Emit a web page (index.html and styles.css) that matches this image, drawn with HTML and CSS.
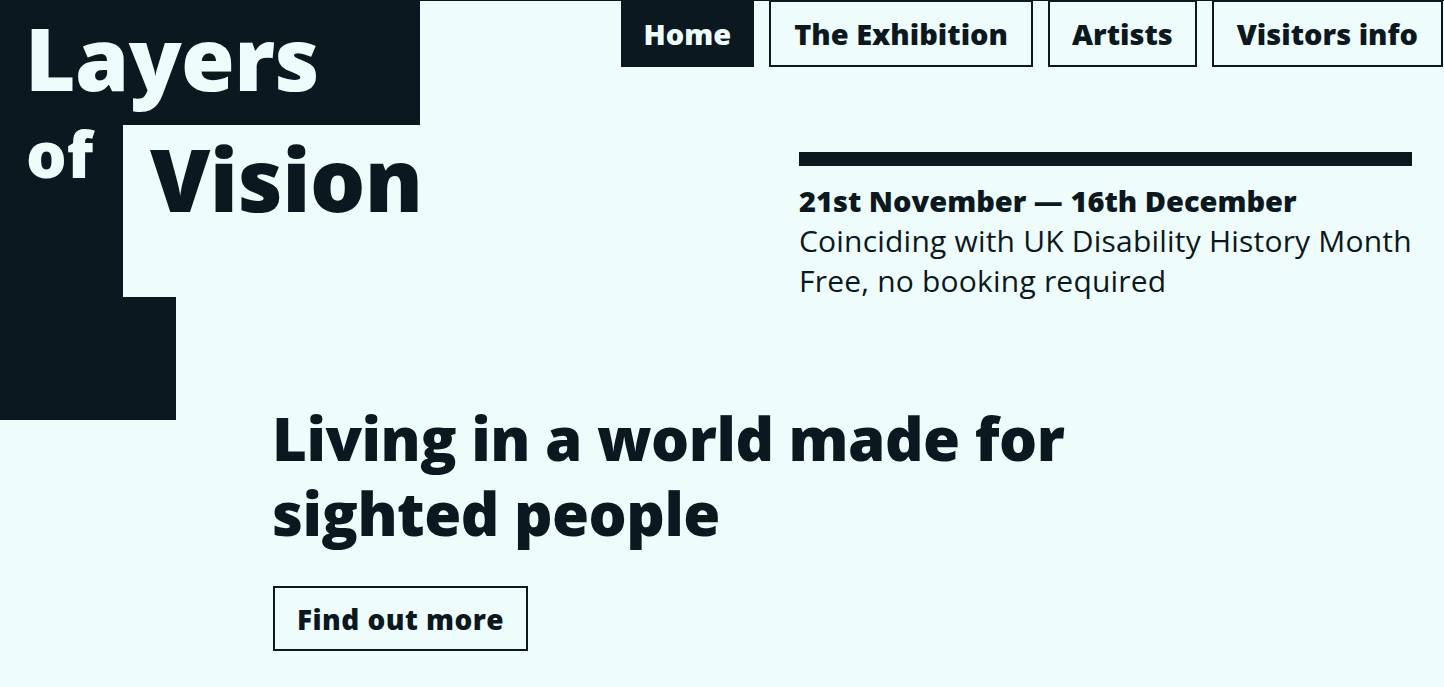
FILE: index.html
```html
<!DOCTYPE html>
<html lang="en">
<head>
<meta charset="utf-8">
<title>Layers of Vision</title>
<link rel="stylesheet" href="styles.css">
</head>
<body>
<div class="page">
  <header class="top">
    <div class="logo">
      <div class="logo-row1"><span class="logo-big">Layers</span></div>
      <div class="logo-row2">
        <div class="logo-of">of</div>
        <div class="logo-vision"><span class="logo-big">Vision</span></div>
      </div>
      <div class="logo-row3"></div>
    </div>
    <div class="side">
      <nav class="nav">
        <a class="nav-item nav-active" href="#">Home</a>
        <a class="nav-item" href="#">The Exhibition</a>
        <a class="nav-item nav-narrow" href="#">Artists</a>
        <a class="nav-item" href="#">Visitors info</a>
      </nav>
      <div class="info">
        <div class="info-bar"></div>
        <p class="info-dates">21st November — 16th December</p>
        <p class="info-line">Coinciding with UK Disability History Month</p>
        <p class="info-line">Free, no booking required</p>
      </div>
    </div>
  </header>
  <main class="hero">
    <h1 class="hero-title">Living in a world made for sighted people</h1>
    <a class="hero-btn" href="#">Find out more</a>
  </main>
</div>
</body>
</html>
```
FILE: styles.css
```css
* { box-sizing: border-box; }
html, body { margin: 0; padding: 0; }
body {
  background: #eefcfc;
  color: #0c1820;
  font-family: "Open Sans", "Liberation Sans", sans-serif;
  border-top: 1px solid #0c1820;
  height: 687px;
  overflow: hidden;
}
.page { display: flex; flex-direction: column; }
.top { display: flex; align-items: flex-start; }
.logo { width: 420px; flex: none; }
.logo-row1 {
  background: #0c1820;
  color: #eefcfc;
  height: 124px;
  padding: 13px 0 0 25px;
}
.logo-big {
  font-weight: 800;
  font-size: 87px;
  line-height: 1;
  letter-spacing: -0.6px;
  display: block;
}
.logo-row2 { display: flex; height: 172px; }
.logo-of {
  flex: none;
  background: #0c1820;
  color: #eefcfc;
  width: 123px;
  font-weight: 800;
  font-size: 64px;
  line-height: 0.9;
  padding-left: 26px;
}
.logo-vision { flex: none; padding: 10px 0 0 27px; color: #0c1820; white-space: nowrap; }
.logo-vision .logo-big { letter-spacing: -0.5px; }
.logo-row3 { background: #0c1820; width: 176px; height: 123px; }

.side { flex: 1; display: flex; flex-direction: column; }
.nav {
  display: flex;
  justify-content: flex-end;
  gap: 15px;
  margin-right: 1px;
}
.nav-item {
  display: flex;
  align-items: center;
  height: 66px;
  padding: 0 23px;
  border: 2px solid #0c1820;
  border-top-width: 1px;
  color: #0c1820;
  text-decoration: none;
  font-weight: 800;
  font-size: 29px;
}
.nav-narrow { padding: 0 22px; }
.nav-active { background: #0c1820; color: #eefcfc; padding: 0 21px; }

.info { width: 613px; margin: 85px 32px 0 auto; }
.info-bar { height: 14px; background: #0c1820; margin-bottom: 15px; }
.info p { margin: 0; font-size: 30px; line-height: 40px; white-space: nowrap; letter-spacing: 0.2px; }
.info .info-dates { font-weight: 800; font-size: 29px; letter-spacing: 0; }

.hero { margin-top: -19px; padding-left: 272px; }
.hero-title {
  margin: 0;
  max-width: 850px;
  font-size: 60px;
  line-height: 75px;
  font-weight: 800;
  letter-spacing: -0.5px;
}
.hero-btn {
  display: inline-flex;
  align-items: center;
  height: 65px;
  margin-top: 35px;
  margin-left: 1px;
  padding: 0 22px;
  border: 2px solid #0c1820;
  color: #0c1820;
  text-decoration: none;
  font-weight: 800;
  font-size: 28px;
  letter-spacing: 0.45px;
}
```
